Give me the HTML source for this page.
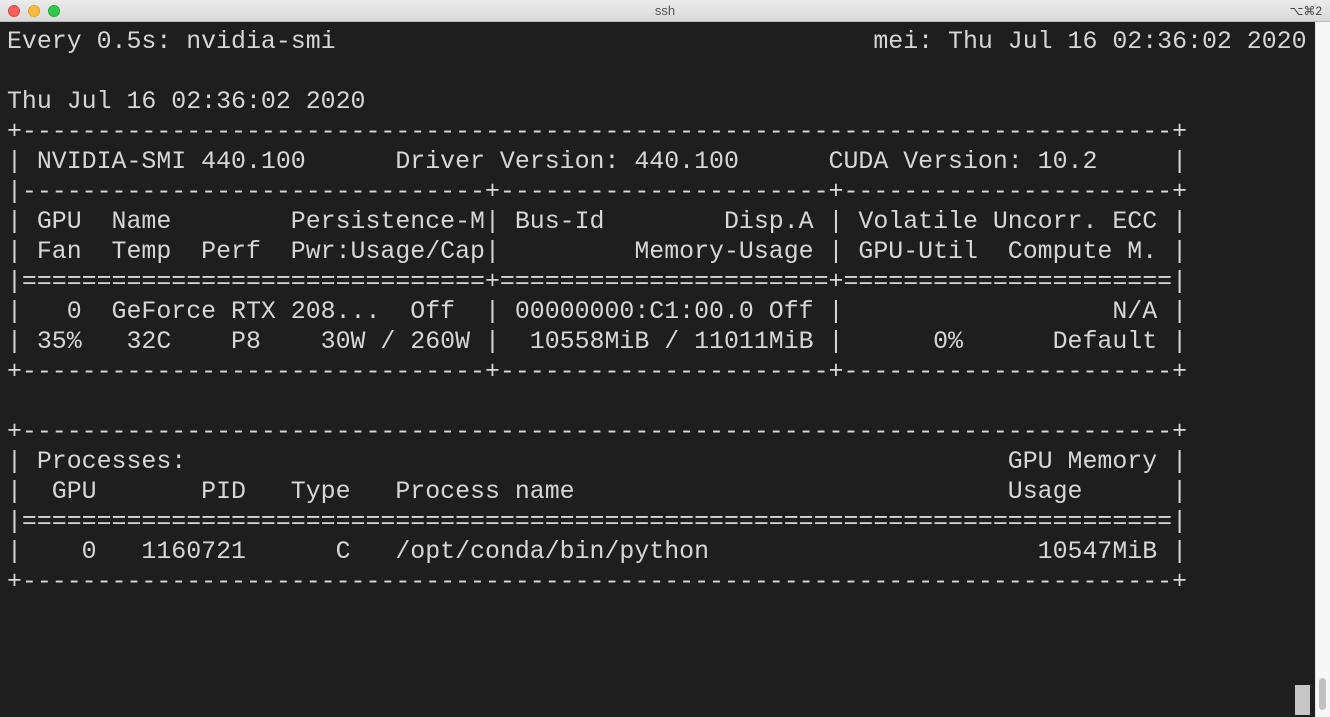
<!DOCTYPE html>
<html><head><meta charset="utf-8"><style>
html,body{margin:0;padding:0;width:1330px;height:717px;overflow:hidden;background:#1e1e1e;}
.tb{position:absolute;left:0;top:0;width:1330px;height:22px;background:linear-gradient(#ececec,#d9d9d9);border-bottom:1px solid #b8b8b8;box-sizing:border-box;}
.tb .t{position:absolute;left:0;right:0;top:3px;text-align:center;font:13px "Liberation Sans",sans-serif;color:#555;}
.tb .k{position:absolute;right:8px;top:4px;font:12px "Liberation Sans","DejaVu Sans",sans-serif;color:#444;}
.d{position:absolute;top:5px;width:12px;height:12px;border-radius:50%;box-sizing:border-box;}
.term{position:absolute;left:0;top:22px;width:1315px;height:695px;background:#1e1e1e;}
pre{position:absolute;left:7px;top:5px;margin:0;font:24.9px/30px "Liberation Mono",monospace;color:#d6d6d6;white-space:pre;}
.sb{position:absolute;left:1315px;top:22px;width:15px;height:695px;background:#f7f7f7;border-left:1px solid #e4e4e4;box-sizing:border-box;}
.th{position:absolute;left:3px;top:656px;width:7px;height:32px;border-radius:4px;background:#c2c2c2;}
.cur{position:absolute;left:1295px;top:685px;width:15px;height:30px;background:#c7c7c7;}
</style></head><body>
<div class="tb">
<div class="d" style="left:8px;background:#fc605c;border:1px solid #de4a45"></div>
<div class="d" style="left:28px;background:#fdbc40;border:1px solid #dea236"></div>
<div class="d" style="left:48px;background:#34c84a;border:1px solid #27aa35"></div>
<div class="t">ssh</div><div class="k">⌥⌘2</div>
</div>
<div class="term"><pre>Every 0.5s: nvidia-smi                                    mei: Thu Jul 16 02:36:02 2020

Thu Jul 16 02:36:02 2020
+-----------------------------------------------------------------------------+
| NVIDIA-SMI 440.100      Driver Version: 440.100      CUDA Version: 10.2     |
|-------------------------------+----------------------+----------------------+
| GPU  Name        Persistence-M| Bus-Id        Disp.A | Volatile Uncorr. ECC |
| Fan  Temp  Perf  Pwr:Usage/Cap|         Memory-Usage | GPU-Util  Compute M. |
|===============================+======================+======================|
|   0  GeForce RTX 208...  Off  | 00000000:C1:00.0 Off |                  N/A |
| 35%   32C    P8    30W / 260W |  10558MiB / 11011MiB |      0%      Default |
+-------------------------------+----------------------+----------------------+

+-----------------------------------------------------------------------------+
| Processes:                                                       GPU Memory |
|  GPU       PID   Type   Process name                             Usage      |
|=============================================================================|
|    0   1160721      C   /opt/conda/bin/python                      10547MiB |
+-----------------------------------------------------------------------------+</pre></div>
<div class="cur"></div>
<div class="sb"><div class="th"></div></div>
</body></html>
